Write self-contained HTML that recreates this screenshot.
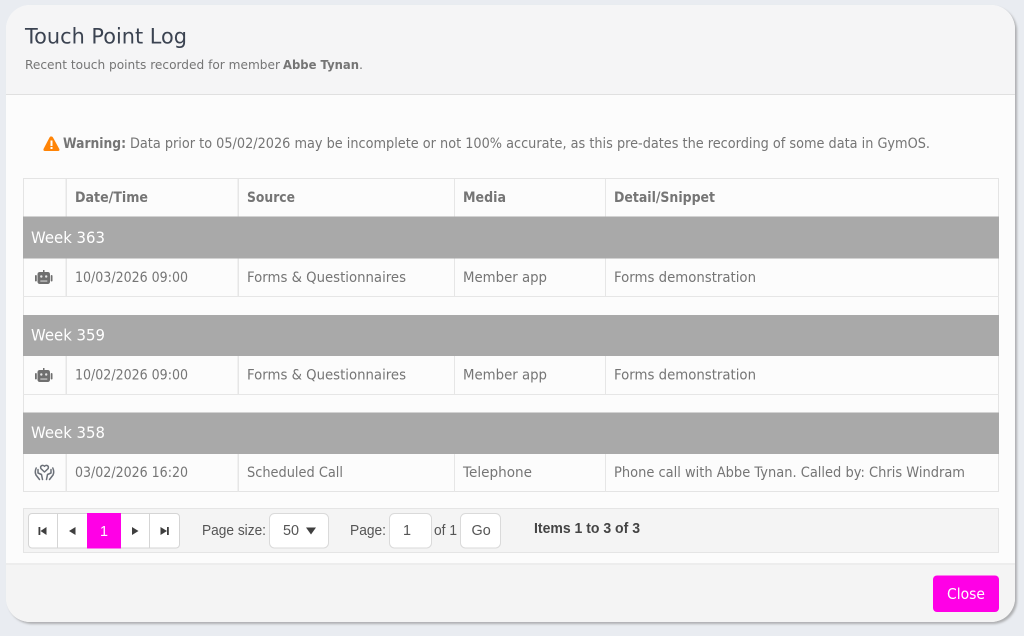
<!DOCTYPE html>
<html><head><meta charset="utf-8"><title>Touch Point Log</title>
<style>
html,body{margin:0;padding:0;width:1024px;height:636px;overflow:hidden;background:#e9ecf1}
svg{position:absolute;left:0;top:0;display:block}
text{font-family:"DejaVu Sans","Liberation Sans",sans-serif;font-size:14.2px;fill:#757575}
.b{font-weight:bold;font-size:14.4px}
.l{font-family:"Liberation Sans",Arial,sans-serif;font-size:14.4px;fill:#555}
.w{font-size:16.2px;fill:#fff}
</style></head><body>
<svg width="1024" height="636" viewBox="0 0 1024 636" xmlns="http://www.w3.org/2000/svg">
<defs><clipPath id="m"><rect x="6" y="5" width="1009" height="617" rx="24"/></clipPath></defs>
<rect x="8" y="7" width="1009" height="617" rx="24" fill="#aeafb1" style="filter:blur(1px)"/>
<g clip-path="url(#m)">
<rect x="6" y="5" width="1009" height="617" fill="#fcfcfc"/>
<rect x="6" y="5" width="1009" height="89" fill="#f5f5f6"/>
<rect x="6" y="94" width="1009" height="1" fill="#e0e0e0"/>
<rect x="6" y="563" width="1009" height="59" fill="#f4f4f4"/>
<rect x="6" y="563" width="1009" height="2" fill="#ededed"/>
</g>
<text x="25" y="43.500" textLength="162" lengthAdjust="spacingAndGlyphs" style="font-size:21.500px;fill:#3b4351">Touch Point Log</text>
<text x="25" y="69" textLength="255" lengthAdjust="spacingAndGlyphs" style="font-size:12.600px">Recent touch points recorded for member</text>
<text class="b" x="283" y="69" textLength="76" lengthAdjust="spacingAndGlyphs" style="font-size:12.600px">Abbe Tynan</text>
<text x="359" y="69" style="font-size:12.600px">.</text>

<path d="M51.500 136.500 Q50.500 136 49.500 137.500 L43.500 149 Q43 151 45 151 L58 151 Q60 151 59.300 149 L53 137.500 Q52.500 136.500 51.500 136.500Z" fill="#ff8406"/>
<rect x="50.500" y="140.500" width="2" height="5.500" fill="#fff"/><rect x="50.500" y="147" width="2" height="2" fill="#fff"/>
<text class="b" x="63" y="148" textLength="63" lengthAdjust="spacingAndGlyphs">Warning:</text>
<text x="130" y="148" textLength="800" lengthAdjust="spacingAndGlyphs">Data prior to 05/02/2026 may be incomplete or not 100% accurate, as this pre-dates the recording of some data in GymOS.</text>

<rect x="23.500" y="178.500" width="975" height="313" fill="#fcfcfc" stroke="#e4e4e4"/>
<g fill="#e6e6e6">
<rect x="65.500" y="179" width="1.500" height="38"/><rect x="237.500" y="179" width="1.500" height="38"/><rect x="454" y="179" width="1" height="38"/><rect x="605" y="179" width="1" height="38"/>
<rect x="65.500" y="258" width="1.500" height="38"/><rect x="237.500" y="258" width="1.500" height="38"/><rect x="454" y="258" width="1" height="38"/><rect x="605" y="258" width="1" height="38"/>
<rect x="65.500" y="356" width="1.500" height="38"/><rect x="237.500" y="356" width="1.500" height="38"/><rect x="454" y="356" width="1" height="38"/><rect x="605" y="356" width="1" height="38"/>
<rect x="65.500" y="454" width="1.500" height="38"/><rect x="237.500" y="454" width="1.500" height="38"/><rect x="454" y="454" width="1" height="38"/><rect x="605" y="454" width="1" height="38"/>
<rect x="23" y="296" width="976" height="1"/><rect x="23" y="394" width="976" height="1"/>
</g>
<rect x="23" y="216.500" width="976" height="42" fill="#a9a9a9"/>
<rect x="23" y="315" width="976" height="41" fill="#a9a9a9"/>
<rect x="23" y="412.500" width="976" height="41.500" fill="#a9a9a9"/>

<text class="b" x="75" y="202" textLength="73" lengthAdjust="spacingAndGlyphs">Date/Time</text>
<text class="b" x="247" y="202" textLength="48" lengthAdjust="spacingAndGlyphs">Source</text>
<text class="b" x="463" y="202" textLength="43" lengthAdjust="spacingAndGlyphs">Media</text>
<text class="b" x="614" y="202" textLength="101" lengthAdjust="spacingAndGlyphs">Detail/Snippet</text>

<text class="w" x="31" y="243" textLength="74" lengthAdjust="spacingAndGlyphs">Week 363</text>
<text class="w" x="31" y="340.500" textLength="74" lengthAdjust="spacingAndGlyphs">Week 359</text>
<text class="w" x="31" y="438" textLength="74" lengthAdjust="spacingAndGlyphs">Week 358</text>

<text x="75" y="282" textLength="113" lengthAdjust="spacingAndGlyphs">10/03/2026 09:00</text>
<text x="247" y="282" textLength="159" lengthAdjust="spacingAndGlyphs">Forms &amp; Questionnaires</text>
<text x="463" y="282" textLength="84" lengthAdjust="spacingAndGlyphs">Member app</text>
<text x="614" y="282" textLength="142" lengthAdjust="spacingAndGlyphs">Forms demonstration</text>

<text x="75" y="379.500" textLength="113" lengthAdjust="spacingAndGlyphs">10/02/2026 09:00</text>
<text x="247" y="379.500" textLength="159" lengthAdjust="spacingAndGlyphs">Forms &amp; Questionnaires</text>
<text x="463" y="379.500" textLength="84" lengthAdjust="spacingAndGlyphs">Member app</text>
<text x="614" y="379.500" textLength="142" lengthAdjust="spacingAndGlyphs">Forms demonstration</text>

<text x="75" y="477" textLength="113" lengthAdjust="spacingAndGlyphs">03/02/2026 16:20</text>
<text x="247" y="477" textLength="96" lengthAdjust="spacingAndGlyphs">Scheduled Call</text>
<text x="463" y="477" textLength="69" lengthAdjust="spacingAndGlyphs">Telephone</text>
<text x="614" y="477" textLength="351" lengthAdjust="spacingAndGlyphs">Phone call with Abbe Tynan. Called by: Chris Windram</text>

<g fill="#6f6f6f">
<rect x="43" y="270" width="1.500" height="3"/>
<rect x="37.500" y="272" width="12.500" height="12" rx="2.200"/>
<rect x="35" y="275" width="1.800" height="6.500" rx=".9"/><rect x="50.700" y="275" width="1.800" height="6.500" rx=".9"/>
<circle cx="41.300" cy="276.500" r="1.200" fill="#e4e4e4"/><circle cx="46.200" cy="276.500" r="1.200" fill="#e4e4e4"/>
<rect x="40.300" y="280.500" width="7" height="1.100" fill="#d4d4d4"/>
</g>
<g fill="#6f6f6f">
<rect x="43" y="368" width="1.500" height="3"/>
<rect x="37.500" y="370" width="12.500" height="12" rx="2.200"/>
<rect x="35" y="373" width="1.800" height="6.500" rx=".9"/><rect x="50.700" y="373" width="1.800" height="6.500" rx=".9"/>
<circle cx="41.300" cy="374.500" r="1.200" fill="#e4e4e4"/><circle cx="46.200" cy="374.500" r="1.200" fill="#e4e4e4"/>
<rect x="40.300" y="378.500" width="7" height="1.100" fill="#d4d4d4"/>
</g>
<g fill="none" stroke="#6b7078" stroke-width="1.500" stroke-linejoin="round" stroke-linecap="round">
<path d="M44.500 472 L41.300 469 Q39.800 467.200 41.300 465.800 Q43.200 464.700 44.500 466.300 Q45.800 464.700 47.700 465.800 Q49.200 467.200 47.700 469 Z"/>
<path d="M36.200 468 Q34.500 472 36 475 L39.500 479.500 M38 469.500 L38 473 L41.500 474.500 L42.500 479.500"/>
<path d="M52.800 468 Q54.500 472 53 475 L49.500 479.500 M51 469.500 L51 473 L47.500 474.500 L46.500 479.500"/>
</g>

<rect x="23.500" y="508.500" width="975" height="44" fill="#f4f4f4" stroke="#e5e5e5"/>
<rect x="28.500" y="513.500" width="151" height="34.500" rx="3.500" fill="#fff" stroke="#d5d5d5"/>
<rect x="57" y="514" width="1" height="34" fill="#d5d5d5"/><rect x="149" y="514" width="1" height="34" fill="#d5d5d5"/>
<rect x="87" y="513" width="34" height="35.500" fill="#ff00e6"/>
<g fill="#3f3f3f">
<rect x="38.500" y="527" width="1.800" height="8"/><path d="M46.500 527 V535 L40.500 531Z"/>
<path d="M75.500 527 V535 L69 531Z"/>
<path d="M132 527 V535 L138.500 531Z"/>
<rect x="167" y="527" width="1.800" height="8"/><path d="M160.500 527 V535 L167 531Z"/>
</g>
<text class="l" x="100" y="536" style="fill:#fff">1</text>
<text class="l" x="202" y="535" textLength="64" lengthAdjust="spacingAndGlyphs">Page size:</text>
<rect x="269.500" y="513.500" width="59" height="34.500" rx="5" fill="#fff" stroke="#dadada"/>
<text class="l" x="283" y="535">50</text>
<path d="M306 527.500 H316 L311 534.500Z" fill="#3f3f3f"/>
<text class="l" x="350" y="535" textLength="36" lengthAdjust="spacingAndGlyphs">Page:</text>
<rect x="389.500" y="513.500" width="42" height="34.500" rx="5" fill="#fff" stroke="#dadada"/>
<text class="l" x="403" y="535">1</text>
<text class="l" x="434" y="535" textLength="23" lengthAdjust="spacingAndGlyphs">of 1</text>
<rect x="460.500" y="513.500" width="40" height="34.500" rx="5" fill="#fff" stroke="#dadada"/>
<text class="l" x="471.500" y="535">Go</text>
<text class="l b" x="534" y="533" textLength="106" lengthAdjust="spacingAndGlyphs" style="fill:#444">Items 1 to 3 of 3</text>

<rect x="933" y="575.500" width="66" height="36.500" rx="4" fill="#ff00e6"/>
<text x="947" y="599" textLength="38" lengthAdjust="spacingAndGlyphs" style="font-size:15.500px;fill:#fff">Close</text>
</svg>
</body></html>
